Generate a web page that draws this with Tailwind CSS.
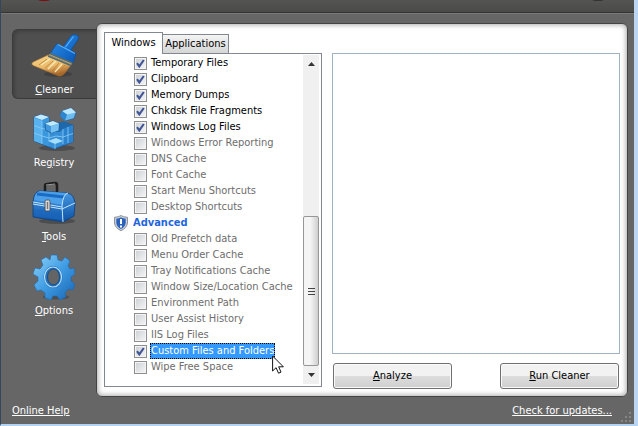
<!DOCTYPE html>
<html lang="en">
<head>
<meta charset="utf-8">
<meta name="viewport" content="width=device-width, initial-scale=1">
<title>Cleaner</title>
<script src="https://cdn.jsdelivr.net/npm/@tailwindcss/browser@4"></script>
</head>
<body class="bg-[#666] font-[Tahoma,'DejaVu_Sans_Condensed','DejaVu_Sans',sans-serif] text-[11px] leading-4 text-black">
<svg width="0" height="0" class="absolute" aria-hidden="true">
  <defs>
    <symbol id="tick" viewBox="0 0 13 13"><path d="M3 6.2 5.3 9.4 9.8 3" fill="none" stroke="#3f5594" stroke-width="2.1"/></symbol>
    <linearGradient id="blue" x1="0" y1="0" x2="1" y2="1"><stop offset="0" stop-color="#8fd3fb"/><stop offset=".5" stop-color="#3f9ce3"/><stop offset="1" stop-color="#1763b4"/></linearGradient>
    <linearGradient id="handle" x1="0" y1="0" x2="1" y2="1"><stop offset="0" stop-color="#2d93ec"/><stop offset="1" stop-color="#0752b2"/></linearGradient>
    <linearGradient id="bristle" x1="0" y1="0" x2=".4" y2="1"><stop offset="0" stop-color="#f6d78f"/><stop offset=".6" stop-color="#ebba6a"/><stop offset="1" stop-color="#a8682a"/></linearGradient>
    <linearGradient id="box" x1="0" y1="0" x2="0" y2="1"><stop offset="0" stop-color="#4a9be4"/><stop offset="1" stop-color="#0b51a5"/></linearGradient>
  </defs>
</svg>
<div class="flex min-h-screen flex-col overflow-hidden border-r-4 border-b-2 border-l border-r-[#bcd6f2] border-b-[#b4d3f2] border-l-[#33475c] bg-[#666]">
  <header class="relative h-[13px] shrink-0 overflow-hidden border-b border-[#333] bg-linear-to-b from-[#545452] to-[#4a4a48]">
    <span class="absolute -top-[15px] left-[33px] h-4 w-5 rounded-full bg-[#7d0d12]"></span>
    <span class="absolute -top-[15px] right-[26px] h-4 w-5 rounded-full bg-[#333]"></span>
  </header>

  <div class="flex flex-1 border-t border-[#7a7a7a] pt-[9px] pr-[6px]">
    <nav class="flex w-[95px] shrink-0 flex-col gap-1 pt-[6px] pl-[11px] text-center text-white">
      <a href="#cleaner" class="flex h-[70px] flex-col items-center justify-between rounded-l-md border border-r-0 border-[#3b3b3b] bg-[#4f4f4f] shadow-[inset_2px_2px_3px_#424242]">
        <svg class="mt-1 h-[46px] w-[50px]" viewBox="0 0 50 46" aria-hidden="true">
          <ellipse cx="28" cy="40" rx="14" ry="3" fill="#333" opacity=".5"/>
          <path d="M33 13 40.500 2.500Q44 -1.500 48.500 2.500 49 4 48 5.500L41 16 46 19.500 43 29 20 20 27 9.500Z" fill="url(#handle)" stroke="#0a4c9b" stroke-width=".7" stroke-linejoin="round"/>
          <path d="M35.500 13 43.500 2.500M28 10.500 45 19.500" stroke="#56b0fa" stroke-width="1.200" fill="none"/>
          <path d="M18 21 41.500 30.500 35 39Q32 43 28.500 42L3 31.500Q.5 30 3 28Z" fill="url(#bristle)" stroke="#9a652c" stroke-width=".6"/>
          <path d="M17 25 9 31M23 27 15 34M29 29 22 37M35 31 28 39" stroke="#bd853e" stroke-width=".9" fill="none"/>
          <path d="M20 25 11 31M26 27 18 35M32 30 25 38" stroke="#ffe9b4" stroke-width="1.200" fill="none"/>
          <path d="M20 19.500 42.500 29M18 22 41 31.500" stroke="#4f6a75" stroke-width="1.500"/>
          <path d="M19 20.500 41.500 30" stroke="#b3a878" stroke-width="1.200"/>
        </svg>
        <span><u>C</u>leaner</span>
      </a>
      <a href="#registry" class="flex h-[70px] flex-col items-center justify-between">
        <svg class="mt-1 h-[46px] w-[46px]" viewBox="0 0 46 46" aria-hidden="true">
          <ellipse cx="26" cy="41" rx="18" ry="3" fill="#333" opacity=".5"/>
          <path d="M3 10 10 7.500 18 10V19L32 15 42 18V35L23 42 3 34Z" fill="#368fd6" stroke="#16569c" stroke-width=".8" stroke-linejoin="round"/>
          <path d="M3 10 10 7.500 18 10 11 13Z" fill="#c3eaff"/>
          <path d="M3 10.500 11 13.500V37L3 34Z" fill="#58b2ed"/>
          <path d="M11 13.500 18 10.500V39.500L11 37Z" fill="#3b97db"/>
          <path d="M18 19 32 15 42 18 33 22 28 25H18Z" fill="#1d69ac"/>
          <path d="M32 22 42 18V35L32 38Z" fill="#2c83cd"/>
          <path d="M17 34 25 31 32 34 24 37Z" fill="#a6ddfb"/>
          <path d="M3 18.500 11 21.500 18 23M3 26 11 29 18 31 25 29 32 30 42 26.500M11 13.500V37M18 25v9M24 37v5M32 22v15M37 20v16" stroke="#8ccdf7" stroke-width=".8" fill="none"/>
          <path d="M14 16.500 22 14 28 16.500 27.500 23.500 20 26 14.500 23Z" fill="#4298dc" stroke="#164f8c" stroke-width=".7"/>
          <path d="M14 16.500 22 14 28 16.500 20 19Z" fill="#c2ebff"/>
          <path d="M20 19 28 16.500 27.500 23.500 20 26Z" fill="#78c2f1"/>
          <path d="M31 4 40 1 45 5.500 43 11.500 34 14 29 9Z" fill="#6cbcf0" stroke="#1b619f" stroke-width=".7"/>
          <path d="M31 4 40 1 45 5.500 36 7.500Z" fill="#bce8ff"/>
          <path d="M31 4 36 7.500 34 14 29 9Z" fill="#2f86ce"/>
        </svg>
        <span class="pb-[2px]">Re<u>g</u>istry</span>
      </a>
      <a href="#tools" class="flex h-[70px] flex-col items-center justify-between">
        <svg class="mt-1 h-[44px] w-[46px]" viewBox="0 0 46 44" aria-hidden="true">
          <ellipse cx="26" cy="40" rx="18" ry="3" fill="#333" opacity=".5"/>
          <path d="M14 12V5Q14 3 16 3L24 2Q26 2 26 4v7" fill="none" stroke="#1e1e1e" stroke-width="2.500"/>
          <path d="M15 4 24 3" stroke="#999" stroke-width="1"/>
          <path d="M2 21Q3 10 9 10L36 12Q43 13 44 22L43 35 32 41 2 36Z" fill="url(#box)" stroke="#0c407f" stroke-width=".8"/>
          <path d="M3 19Q4 11 9 10L36 12Q32 15 31 24Z" fill="#4ca0ea"/>
          <path d="M6 13 33 16" stroke="#1a6bc4" stroke-width="3"/>
          <path d="M2 23 31 28 44 22M32 41 31 25Q32 13 37 12M2 21 31 26" stroke="#c2e6ff" stroke-width="1" fill="none"/>
          <path d="M3 28 31 33V39L3 35Z" fill="#1d68bf" opacity=".6"/>
          <rect x="14" y="19" width="5" height="11" rx="1.500" fill="#d8d8d8" stroke="#484848" stroke-width=".8"/>
          <path d="M16.500 21v7" stroke="#777" stroke-width="1.300"/>
        </svg>
        <span class="pb-[2px]"><u>T</u>ools</span>
      </a>
      <a href="#options" class="flex h-[70px] flex-col items-center justify-between">
        <svg class="mt-[3px] h-[46px] w-[42px]" viewBox="0 0 42 46" aria-hidden="true">
          <ellipse cx="23" cy="43" rx="13" ry="2.500" fill="#333" opacity=".5"/>
          <path d="M18 1h6l1 5 4 1 3-4 5 4-2 5 2 3 4-1 1 6-4 3v4l4 3-2 6-5-1-3 4 1 4-6 3-3-4h-4l-2 4-6-2v-5l-4-3-4 1-3-6 4-4v-4l-5-3 2-6 5 1 3-4-2-5 5-3 4 3Z" fill="url(#blue)" stroke="#1e69b2" stroke-width=".6" stroke-linejoin="round"/>
          <ellipse cx="20" cy="23" rx="9.500" ry="11" fill="#2671bc"/>
          <ellipse cx="20" cy="23" rx="8.500" ry="10" fill="none" stroke="#b4e2ff" stroke-width="1.200"/>
          <ellipse cx="20.500" cy="23" rx="6" ry="8" fill="#646464" stroke="#154e8b" stroke-width="1"/>
        </svg>
        <span class="pb-[2px]"><u>O</u>ptions</span>
      </a>
    </nav>

    <main class="flex flex-1 gap-[10px] rounded-md border border-[#444] bg-white pt-2 pr-[7px] pb-[9px] pl-[7px] shadow-[inset_0_0_5px_1px_#aaa]">
      <section class="flex w-[218px] shrink-0 flex-col">
        <div role="tablist" class="flex items-end">
          <button role="tab" aria-selected="true" class="relative z-10 -mb-px h-[22px] w-[59px] border border-b-0 border-[#828790] bg-white pb-px">Windows</button>
          <button role="tab" aria-selected="false" class="h-[19px] w-[66px] border border-b-0 border-l-0 border-[#828790] bg-linear-to-b from-[#f4f4f4] to-[#d5d5d5]">Applications</button>
        </div>
        <div class="flex flex-1 justify-between border border-[#828790] bg-white pt-px pr-[2px] pb-[2px]">
          <ul class="flex flex-col pl-2 text-[#6d6d6d] [&_input]:col-start-1 [&_input]:row-start-1 [&_input]:size-[13px] [&_input]:appearance-none [&_input]:border [&_input]:border-[#8e8f8f] [&_input]:bg-linear-to-br [&_input]:from-[#cbcfd5] [&_input]:to-[#f6f6f6] [&_input]:shadow-[inset_0_0_0_1px_#f4f4f4] [&_label]:grid [&_label]:h-4 [&_label]:grid-cols-[13px_auto] [&_label]:items-center [&_label]:justify-start [&_label]:gap-x-[3px] [&_label]:pl-[21px] [&_label]:whitespace-nowrap [&_label_span]:px-px [&_label_svg]:pointer-events-none [&_label_svg]:z-10 [&_label_svg]:col-start-1 [&_label_svg]:row-start-1 [&_label_svg]:size-[13px]">
            <li class="text-black"><label><input type="checkbox" checked><svg><use href="#tick"/></svg><span>Temporary Files</span></label></li>
            <li class="text-black"><label><input type="checkbox" checked><svg><use href="#tick"/></svg><span>Clipboard</span></label></li>
            <li class="text-black"><label><input type="checkbox" checked><svg><use href="#tick"/></svg><span>Memory Dumps</span></label></li>
            <li class="text-black"><label><input type="checkbox" checked><svg><use href="#tick"/></svg><span>Chkdsk File Fragments</span></label></li>
            <li class="text-black"><label><input type="checkbox" checked><svg><use href="#tick"/></svg><span>Windows Log Files</span></label></li>
            <li><label><input type="checkbox"><span>Windows Error Reporting</span></label></li>
            <li><label><input type="checkbox"><span>DNS Cache</span></label></li>
            <li><label><input type="checkbox"><span>Font Cache</span></label></li>
            <li><label><input type="checkbox"><span>Start Menu Shortcuts</span></label></li>
            <li><label><input type="checkbox"><span>Desktop Shortcuts</span></label></li>
            <li class="flex h-4 items-center gap-1 font-bold text-[#1f66dd]">
              <svg class="size-4" viewBox="0 0 16 16" aria-hidden="true"><path d="M8 .5Q10 2 14.500 2.300V8Q14 13 8 15.700 2 13 1.500 8V2.300Q6 2 8 .5Z" fill="#c9ced6" stroke="#777e88" stroke-width=".8"/><path d="M8 2.500Q10 3.600 12.700 3.800V8Q12 12 8 14 4 12 3.300 8V3.800Q6 3.600 8 2.500Z" fill="#2a62bd"/><path d="M8 4v5M8 10.500v2" stroke="#fff" stroke-width="2"/></svg>
              <h2>Advanced</h2>
            </li>
            <li><label><input type="checkbox"><span>Old Prefetch data</span></label></li>
            <li><label><input type="checkbox"><span>Menu Order Cache</span></label></li>
            <li><label><input type="checkbox"><span>Tray Notifications Cache</span></label></li>
            <li><label><input type="checkbox"><span>Window Size/Location Cache</span></label></li>
            <li><label><input type="checkbox"><span>Environment Path</span></label></li>
            <li><label><input type="checkbox"><span>User Assist History</span></label></li>
            <li><label><input type="checkbox"><span>IIS Log Files</span></label></li>
            <li class="relative"><label><input type="checkbox" checked><svg><use href="#tick"/></svg><span class="bg-[#3399ff] text-white outline-1 -outline-offset-1 outline-dotted outline-black">Custom Files and Folders</span></label>
              <svg class="absolute top-3 left-[159px] z-20 h-[19px] w-3" viewBox="0 0 12 19" aria-hidden="true"><path d="M.6 1v15l3.500-3.300L6.500 18.200 9 17.100 6.700 11.800H11.400Z" fill="#fff" stroke="#111" stroke-width="1"/></svg>
            </li>
            <li><label><input type="checkbox"><span>Wipe Free Space</span></label></li>
          </ul>
          <div class="flex w-4 flex-col bg-[#f0f0f0]" role="scrollbar" aria-controls="results" aria-orientation="vertical" aria-valuenow="100">
            <button aria-label="Scroll up" class="flex h-[17px] items-center justify-center"><svg class="h-[4px] w-[7px]" viewBox="0 0 7 4"><path d="M0 4 3.500 0 7 4Z" fill="#333"/></svg></button>
            <div class="flex-[145]"></div>
            <div class="flex flex-[149] flex-col items-center justify-center gap-px rounded-xs border border-[#979797] bg-linear-to-r from-[#f5f5f5] from-45% to-[#cfcfcf]">
              <span class="h-px w-[7px] bg-[#444]"></span><span class="mt-px h-px w-[7px] bg-[#444]"></span><span class="mt-px h-px w-[7px] bg-[#444]"></span>
            </div>
            <button aria-label="Scroll down" class="flex h-[18px] items-center justify-center"><svg class="h-[4px] w-[7px]" viewBox="0 0 7 4"><path d="M0 0 3.500 4 7 0Z" fill="#333"/></svg></button>
          </div>
        </div>
      </section>

      <section class="flex flex-1 flex-col pt-[21px]">
        <div id="results" class="flex-1 border border-[#9fb3c2] bg-white"></div>
        <div class="mt-[9px] flex justify-between px-px">
          <button class="-mb-[2px] h-[26px] w-[119px] rounded-[3px] border border-[#707070] bg-linear-to-b from-[#f2f2f2] from-50% via-[#dddddd] via-50% to-[#cfcfcf] shadow-[inset_0_0_0_1px_#fafafa]"><u>A</u>nalyze</button>
          <button class="-mb-[2px] h-[26px] w-[119px] rounded-[3px] border border-[#707070] bg-linear-to-b from-[#f2f2f2] from-50% via-[#dddddd] via-50% to-[#cfcfcf] shadow-[inset_0_0_0_1px_#fafafa]"><u>R</u>un Cleaner</button>
        </div>
      </section>
    </main>
  </div>

  <footer class="relative flex h-[27px] shrink-0 items-center justify-between pr-[22px] pl-[11px] text-white">
    <a href="#help" class="underline">Online Help</a>
    <a href="#updates" class="underline">Check for updates...</a>
    <svg class="absolute right-[2px] bottom-[2px] size-[11px]" viewBox="0 0 11 11" aria-hidden="true"><path d="M8 1h2v2H8ZM4 5h2v2H4ZM8 5h2v2H8ZM0 9h2v2H0ZM4 9h2v2H4ZM8 9h2v2H8Z" fill="#858585"/></svg>
  </footer>
</div>
</body>
</html>
